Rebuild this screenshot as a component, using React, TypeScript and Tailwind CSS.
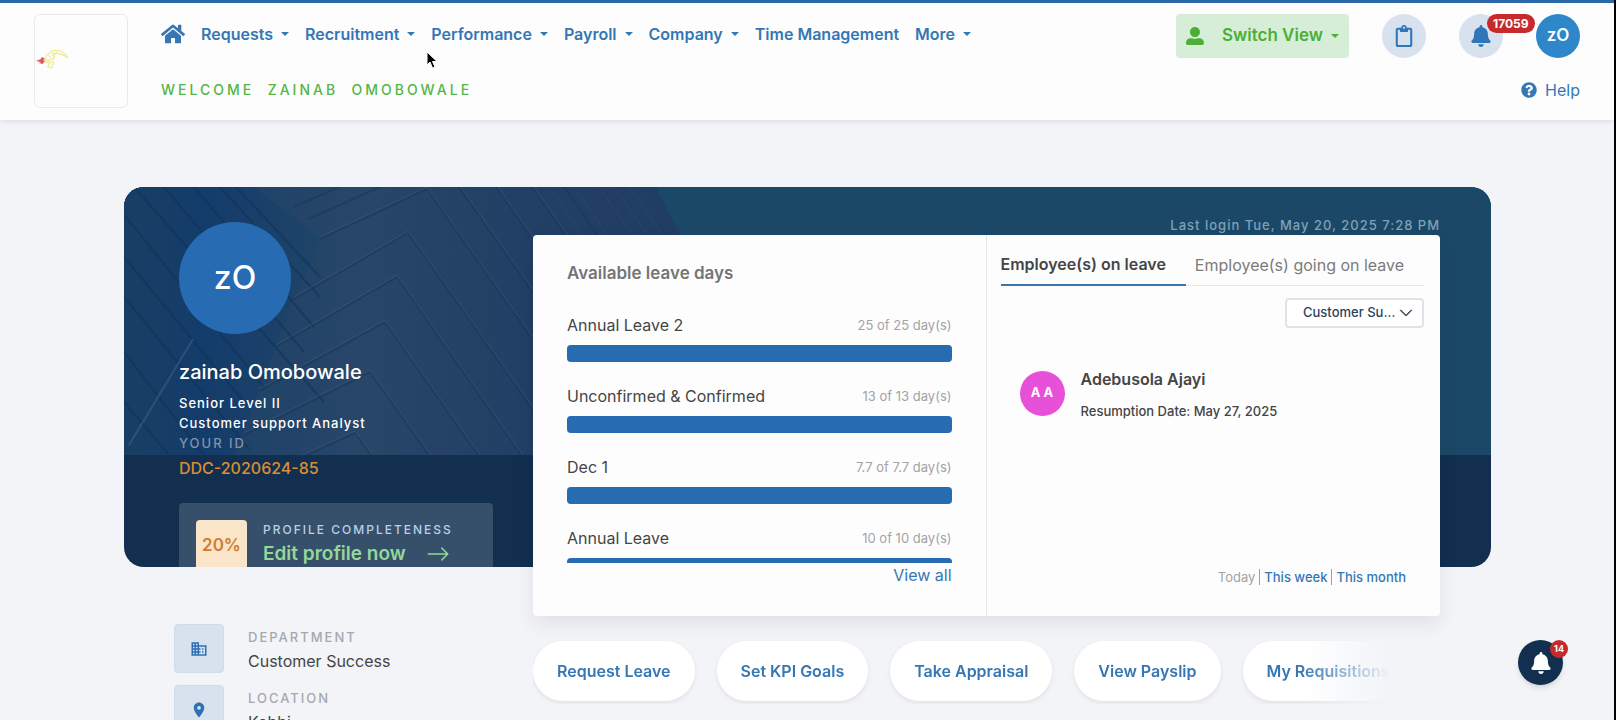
import { FC, ReactNode } from "react";
import { FaBell, FaHome, FaQuestionCircle, FaRegClipboard, FaUserAlt } from "react-icons/fa";
import { BsArrowRight, BsChevronDown } from "react-icons/bs";
import { MdLocationOn, MdOutlineBusiness } from "react-icons/md";

const navItems = [
  { label: "Requests", menu: true },
  { label: "Recruitment", menu: true },
  { label: "Performance", menu: true },
  { label: "Payroll", menu: true },
  { label: "Company", menu: true },
  { label: "Time Management", menu: false },
  { label: "More", menu: true },
];

const leaves = [
  { name: "Annual Leave 2", left: 25, total: 25 },
  { name: "Unconfirmed & Confirmed", left: 13, total: 13 },
  { name: "Dec 1", left: 7.7, total: 7.7 },
  { name: "Annual Leave", left: 10, total: 10 },
];

const quickLinks = ["Request Leave", "Set KPI Goals", "Take Appraisal", "View Payslip", "My Requisitions"];

const Caret: FC = () => (
  <span className="h-0 w-0 border-x-4 border-t-4 border-x-transparent border-t-current" />
);

const Logo: FC = () => (
  <svg viewBox="0 0 94 94" className="h-full w-full" fill="none">
    <path d="M1 47l5-2 1-2 4 2-3 1 3 1-2 1-1 2-4-1 2-1z" fill="#e0565a" />
    <path
      d="M10 46l2-5 5-4 4-1 6 1 5 4 1 2-6-3-6-1-3 1 2 3-2 2 1 4-2 5-4-1 2-4-4-1 3-2z"
      stroke="#eeec8c"
      strokeWidth="1.2"
    />
    <path d="M13 41l4 3-3 3 4 2M18 38l2 5M23 37l-3 4" stroke="#eeec8c" />
  </svg>
);

const Header: FC = () => (
  <header className="flex min-h-[120px] items-start border-t-[3px] border-[#2a68a9] bg-[#fdfdfe] px-[34px] pt-[11px] shadow-[0_1px_6px_rgba(0,0,0,0.1)]">
    <div className="mr-[33px] h-[94px] w-[94px] shrink-0 rounded-md border border-[#ece8ee]">
      <Logo />
    </div>
    <div className="flex-1">
      <div className="flex h-11 items-start justify-between">
        <nav className="flex h-10 items-center gap-4 font-semibold text-[#3577b3]">
          <a href="#" aria-label="Home">
            <FaHome className="h-6 w-6" />
          </a>
          {navItems.map((item) => (
            <a key={item.label} href="#" className="flex items-center gap-2 whitespace-nowrap">
              {item.label}
              {item.menu && <Caret />}
            </a>
          ))}
        </nav>
        <div className="flex items-center gap-[33px]">
          <button className="flex h-11 w-[173px] items-center rounded bg-[#d6eed8] px-[10px] font-semibold text-[#4caf36]">
            <FaUserAlt className="mr-[18px] h-[18px] w-[18px]" />
            <span className="mr-2 text-[17px] whitespace-nowrap">Switch View</span>
            <Caret />
          </button>
          <button
            aria-label="Tasks"
            className="flex h-11 w-11 items-center justify-center rounded-full bg-[#d7e2ee] text-[#2f76b9]"
          >
            <FaRegClipboard className="h-[22px] w-[22px]" />
          </button>
          <button
            aria-label="Notifications"
            className="relative flex h-11 w-11 items-center justify-center rounded-full bg-[#d7e2ee] text-[#2f76b9]"
          >
            <FaBell className="h-[22px] w-[22px]" />
            <span className="absolute top-0 left-7 rounded-full bg-[#c72a2d] px-1.5 text-xs leading-[19px] font-bold text-white">
              17059
            </span>
          </button>
          <button className="h-11 w-11 rounded-full bg-[#2e87c8] text-[17px] font-semibold text-white">
            zO
          </button>
        </div>
      </div>
      <div className="mt-5 flex h-6 items-center justify-between">
        <p className="text-sm font-medium tracking-[3px] text-[#55b546] uppercase">
          Welcome&nbsp; Zainab&nbsp; Omobowale
        </p>
        <a href="#" className="flex items-center gap-2 text-[#3577b3]">
          <FaQuestionCircle className="h-4 w-4" />
          Help
        </a>
      </div>
    </div>
  </header>
);

// facade of an office block, fading into the flat teal on the right
const Facade: FC = () => (
  <svg viewBox="0 0 600 268" className="h-[268px] w-[600px]" fill="none">
    <defs>
      <linearGradient id="wall" x1="0" y1="0" x2="1" y2="0">
        <stop offset="0" stopColor="#163f68" />
        <stop offset="0.4" stopColor="#284668" />
        <stop offset="0.65" stopColor="#223f65" />
        <stop offset="1" stopColor="#203c62" />
      </linearGradient>
      <linearGradient id="side" x1="0" y1="0" x2="1" y2="0">
        <stop offset="0" stopColor="#183f62" />
        <stop offset="0.4" stopColor="#143c6b" />
        <stop offset="1" stopColor="#1f4468" />
      </linearGradient>
    </defs>
    <path d="M0 0H532L600 134V268H0z" fill="url(#wall)" />
    <path d="M0 0H130L196 50 190 72 170 112 150 165 110 268H0z" fill="url(#side)" />
    <path
      d="M10 0L200 215M0 28L140 200M0 70L120 215M0 110L125 262M40 0L180 165M70 0L190 140M96 0L196 110M112 0L196 90M0 165L80 268M0 215L45 268"
      stroke="#0f3358"
      strokeOpacity="0.6"
      strokeWidth="2"
    />
    <path d="M69 152L5 258" stroke="#3a5f84" strokeOpacity="0.6" strokeWidth="2" />
    <path
      d="M170 20L215 0M185 32L260 -2M196 52L303 2 490 268M170 112L284 46 441 268M152 160L273 90 397 268M135 204L261 135 354 268M120 248L246 185 305 268M165 276L231 246 247 268M335 0L523 268M372 0L560 268M408 0L596 268M440 0L600 228"
      stroke="#1a3859"
      strokeOpacity="0.6"
      strokeWidth="2"
    />
    <path
      d="M196 50L303 0 492 268M170 110L284 44 443 268M152 158L273 88 399 268M135 202L261 133 356 268M120 246L246 183 307 268M165 274L231 244 249 268M337 0L525 268M374 0L562 268M410 0L598 268"
      stroke="#3f5d80"
      strokeOpacity="0.5"
    />
    <path
      d="M425 0L460 50M450 0L485 50M475 0L510 50M490 0L525 50M505 0L540 50"
      stroke="#35527a"
      strokeOpacity="0.4"
    />
  </svg>
);

const Profile: FC = () => (
  <div className="relative h-full w-[409px] shrink-0 overflow-hidden pt-[35px] pl-[55px] text-white">
    <div className="flex h-28 w-28 items-center justify-center rounded-full bg-[#276bb3] text-[32px] font-medium">
      zO
    </div>
    <h1 className="mt-6 text-xl leading-7 font-medium">zainab Omobowale</h1>
    <p className="mt-[7px] text-[13px] leading-5 font-medium tracking-[1px]">
      Senior Level II
      <br />
      Customer support Analyst
    </p>
    <p className="text-[13px] leading-5 font-medium tracking-[2px] text-[#8092ab]">YOUR ID</p>
    <p className="mt-[3px] leading-6 font-medium text-[#d98e35]">DDC-2020624-85</p>
    <div className="mt-[23px] flex h-24 w-[314px] gap-4 rounded bg-[#364f6b] p-[17px]">
      <div className="flex h-[51px] w-[51px] items-center justify-center rounded bg-[#fae5c9] text-[17px] font-semibold text-[#d17c2c]">
        20%
      </div>
      <div>
        <p className="text-xs leading-5 font-medium tracking-[2px] text-[#b9cfe8]">PROFILE COMPLETENESS</p>
        <a href="#" className="flex items-center gap-5 text-[19px] leading-7 font-semibold text-[#93d898]">
          Edit profile now
          <BsArrowRight className="h-6 w-6" />
        </a>
      </div>
    </div>
  </div>
);

const LeaveDays: FC = () => (
  <div className="border-r border-[#e5e7eb] px-[34px] pt-6">
    <h2 className="text-[17px] leading-7 font-semibold text-[#757575]">Available leave days</h2>
    <ul className="mt-[26px] h-[250px] overflow-hidden">
      {leaves.map((leave) => (
        <li key={leave.name} className="mb-[22px]">
          <div className="mb-2 flex items-center justify-between leading-6 text-[#454545]">
            {leave.name}
            <span className="text-[13px] text-[#a3a3a3]">
              {leave.left} of {leave.total} day(s)
            </span>
          </div>
          <div className="h-[17px] rounded bg-gray-200">
            <div
              className="h-full rounded bg-[#276bb0]"
              style={{ width: `${(leave.left / leave.total) * 100}%` }}
            />
          </div>
        </li>
      ))}
    </ul>
    <a href="#" className="block text-right leading-6 text-[#3577b3]">
      View all
    </a>
  </div>
);

const OnLeave: FC = () => (
  <div className="flex flex-col pt-[13px] pr-4 pl-[14px]">
    <div className="flex border-b border-[#e5e7eb] whitespace-nowrap">
      <button className="-mb-px border-b-2 border-[#3a76ac] pr-5 pb-1 leading-8 font-semibold text-[#454545]">
        Employee(s) on leave
      </button>
      <button className="pb-1 pl-[9px] leading-8 text-[#7b7b7b]">Employee(s) going on leave</button>
    </div>
    <div className="relative mt-3 self-end">
      <select
        aria-label="Department"
        className="block h-[30px] w-[139px] appearance-none overflow-hidden rounded border-2 border-[#dfe3e9] bg-white pr-5 pl-4 text-[13px] font-medium text-ellipsis whitespace-nowrap text-[#2c4460]"
      >
        <option>Customer Success</option>
      </select>
      <BsChevronDown className="pointer-events-none absolute top-2 right-[11px] h-[14px] w-[14px] stroke-1 text-gray-600" />
    </div>
    <div className="mt-[35px] flex items-center gap-4 pl-[19px]">
      <div className="flex h-[45px] w-[45px] items-center justify-center rounded-full bg-[#e750d8] text-[13px] font-bold text-white">
        A A
      </div>
      <div className="pt-1 text-[#454545]">
        <p className="font-semibold">Adebusola Ajayi</p>
        <p className="mt-2 text-[13px] leading-6 font-medium">Resumption Date: May 27, 2025</p>
      </div>
    </div>
    <div className="mt-auto mr-[18px] mb-[29px] flex items-center gap-1 self-end text-[13px] text-[#3577b3]">
      <span className="text-[#a3a3a3]">Today</span>
      <span className="h-4 w-px bg-gray-400" />
      <a href="#" className="font-medium">This week</a>
      <span className="h-4 w-px bg-gray-400" />
      <a href="#" className="font-medium">This month</a>
    </div>
  </div>
);

const Detail: FC<{ icon: ReactNode; label: string; value: string }> = ({ icon, label, value }) => (
  <div className="mb-3 flex h-[49px] items-center gap-6">
    <div className="flex h-[49px] w-[50px] items-center justify-center rounded border border-[#cfddeb] bg-[#d7e2ee] text-[#2f6fb3]">
      {icon}
    </div>
    <div>
      <p className="text-[13px] leading-6 font-medium tracking-[2px] text-[#a6a8ad]">{label}</p>
      <p className="leading-6 text-[#454545]">{value}</p>
    </div>
  </div>
);

const App: FC = () => {
  return (
    <div className="relative h-screen overflow-hidden border-r-2 border-black bg-[#f2f4f8] font-[Inter,sans-serif] text-base">
      <Header />

      <main className="pt-[67px] pr-[123px] pl-[124px]">
        <section className="relative flex h-[380px] rounded-[20px] bg-[#122f50]">
          <div className="absolute inset-x-0 top-0 h-[268px] overflow-hidden rounded-t-[20px] bg-[#1b4867]">
            <Facade />
          </div>
          <Profile />
          <div className="relative mr-[51px] flex-1">
            <p className="pt-7 text-right text-[13px] leading-5 font-medium tracking-[1px] text-[#7fa1b8]">
              Last login Tue, May 20, 2025 7:28 PM
            </p>
            <div className="grid h-[381px] grid-cols-2 rounded bg-[#fdfdfe] shadow-[0_8px_20px_rgba(0,0,0,0.08)]">
              <LeaveDays />
              <OnLeave />
            </div>
          </div>
        </section>

        <section className="mt-[57px] flex">
          <div className="w-[409px] shrink-0 pl-[50px]">
            <Detail icon={<MdOutlineBusiness className="h-[18px] w-[18px]" />} label="DEPARTMENT" value="Customer Success" />
            <Detail icon={<MdLocationOn className="h-[18px] w-[18px]" />} label="LOCATION" value="Kebbi" />
          </div>
          <div className="mr-[101px] flex h-20 min-w-0 flex-1 items-start gap-[22px] overflow-hidden mask-r-from-[calc(100%-90px)] mask-r-to-100% pt-[17px]">
            {quickLinks.map((link) => (
              <button
                key={link}
                className="h-[60px] shrink-0 rounded-full bg-white px-6 font-semibold text-[#3577b3] shadow-[0_2px_5px_rgba(0,0,0,0.08)]"
              >
                {link}
              </button>
            ))}
          </div>
        </section>
      </main>

      <button
        aria-label="Alerts"
        className="absolute right-[51px] bottom-[35px] flex h-[45px] w-[45px] items-center justify-center rounded-full bg-[#122f50] text-white shadow-md"
      >
        <FaBell className="h-[22px] w-[22px]" />
        <span className="absolute top-0 -right-[5px] h-[18px] w-[18px] rounded-full bg-[#c72a2d] text-[9px] leading-[18px] font-bold">
          14
        </span>
      </button>

      {/* mouse pointer */}
      <svg viewBox="0 0 12 18" className="absolute top-[51px] left-[426px] h-[18px] w-3">
        <path d="M1 1v13l3-3 2.500 6 2.500-1-2.500-5.500H11z" fill="#000" stroke="#fff" />
      </svg>
    </div>
  );
};

export default App;
